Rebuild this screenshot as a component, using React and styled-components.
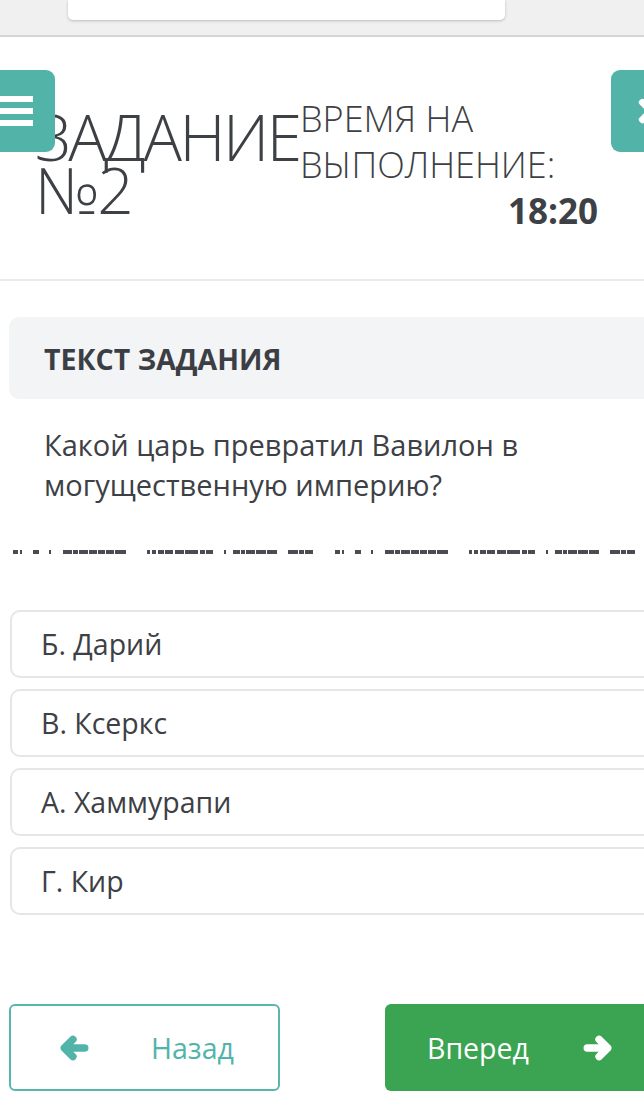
import React from 'react';
import styled, { createGlobalStyle } from 'styled-components';
import { FaTimes } from 'react-icons/fa';

const GlobalStyle = createGlobalStyle`
  html, body {
    margin: 0;
    padding: 0;
    background: #ffffff;
    overflow-x: hidden;
  }
  body {
    font-family: "Open Sans", "Liberation Sans", sans-serif;
    color: #3d4045;
  }
`;

const options = ['Б. Дарий', 'В. Ксеркс', 'А. Хаммурапи', 'Г. Кир'];

// segments of the dotted divider: [start, end] in px, one group
const dashGroup = [
  [13, 18], [20, 22], [33, 39], [49, 51], [63, 72], [73, 78], [79, 88], [89, 97],
  [98, 105], [106, 114], [115, 126], [147, 150], [152, 156], [158, 164], [165, 173],
  [175, 184], [185, 198], [200, 205], [206, 213], [224, 226], [233, 240], [241, 245],
  [246, 255], [256, 266], [267, 277], [288, 298], [299, 304], [305, 313],
];

const Arrow = ({ dir }) => (
  <ArrowSvg viewBox="0 0 28 24" $flip={dir === 'right'}>
    <path
      d="M5 12 H24 M13 4 L5 12 L13 20"
      fill="none"
      stroke="currentColor"
      strokeWidth="7"
      strokeLinecap="round"
      strokeLinejoin="round"
    />
  </ArrowSvg>
);

const App = () => {
  const dashes = [
    ...dashGroup,
    ...dashGroup.map(([a, b]) => [a + 322, b + 322]),
  ];
  let last = 0;

  return (
    <Page>
      <GlobalStyle />
      <TopBar>
        <AddressBox />
      </TopBar>

      <Header>
        <MenuButton>
          <MenuBars>
            <span />
            <span />
            <span />
          </MenuBars>
        </MenuButton>
        <CloseButton>
          <FaTimes />
        </CloseButton>

        <TaskTitle>ЗАДАНИЕ №2</TaskTitle>
        <TimeBlock>
          <TimeLabel>ВРЕМЯ НА ВЫПОЛНЕНИЕ:</TimeLabel>
          <TimeValue>18:20</TimeValue>
        </TimeBlock>
      </Header>

      <TaskPanel>
        <PanelTitle>ТЕКСТ ЗАДАНИЯ</PanelTitle>
      </TaskPanel>

      <Question>Какой царь превратил Вавилон в могущественную империю?</Question>

      <Divider>
        {dashes.map(([a, b], i) => {
          const gap = a - last;
          last = b;
          return <Dash key={i} $gap={gap} $w={b - a} />;
        })}
      </Divider>

      <OptionList>
        {options.map((o) => (
          <Option key={o}>{o}</Option>
        ))}
      </OptionList>

      <NavRow>
        <BackButton>
          <Arrow dir="left" />
          <span>Назад</span>
        </BackButton>
        <NextButton>
          <span>Вперед</span>
          <Arrow dir="right" />
        </NextButton>
      </NavRow>
    </Page>
  );
};

export default App;

const Page = styled.div`
  width: 644px;
  min-height: 1118px;
  overflow: hidden;
`;

const TopBar = styled.div`
  height: 35px;
  background: #f0f0f0;
  border-bottom: 2px solid #d6d6d6;
  padding-left: 68px;
`;

const AddressBox = styled.div`
  width: 437px;
  height: 20px;
  background: #ffffff;
  border-radius: 0 0 5px 5px;
  box-shadow: 0 1px 3px rgba(0, 0, 0, 0.22);
`;

const Header = styled.header`
  position: relative;
  height: 244px;
  box-sizing: border-box;
  border-bottom: 2px solid #ebebeb;
  display: flex;
  align-items: flex-start;
  padding: 59px 0 0 35px;
`;

const MenuButton = styled.div`
  position: absolute;
  left: -20px;
  top: 33px;
  width: 75px;
  height: 82px;
  background: #52b4a9;
  border-radius: 9px;
  display: flex;
  align-items: center;
  z-index: 1;
`;

const MenuBars = styled.div`
  display: flex;
  flex-direction: column;
  gap: 6px;
  margin-left: 20px;
  & span {
    display: block;
    width: 33px;
    height: 6px;
    background: #ffffff;
  }
`;

const CloseButton = styled.div`
  position: absolute;
  left: 611px;
  top: 33px;
  width: 70px;
  height: 82px;
  background: #52b4a9;
  border-radius: 9px;
  color: #ffffff;
  display: flex;
  align-items: center;
  padding-left: 22px;
  box-sizing: border-box;
  font-size: 36px;
`;

const TaskTitle = styled.h1`
  flex: none;
  margin: 14px 0 0;
  width: 265px;
  font-size: 64px;
  line-height: 53px;
  font-weight: 300;
  letter-spacing: -2.5px;
  color: #3d4045;
`;

const TimeBlock = styled.div`
  flex: none;
  width: 298px;
  display: flex;
  flex-direction: column;
`;

const TimeLabel = styled.div`
  font-size: 36px;
  line-height: 46px;
  font-weight: 300;
  width: 290px;
`;

const TimeValue = styled.div`
  font-size: 35px;
  line-height: 46px;
  font-weight: 700;
  text-align: right;
`;

const TaskPanel = styled.div`
  margin: 36px 0 0 9px;
  width: 680px;
  height: 82px;
  background: #f3f4f6;
  border-radius: 10px;
  display: flex;
  align-items: center;
  padding-left: 35px;
  box-sizing: border-box;
`;

const PanelTitle = styled.h2`
  margin: 2px 0 0;
  font-size: 28.5px;
  font-weight: 700;
  color: #3b3e44;
`;

const Question = styled.p`
  margin: 26px 0 0 44px;
  width: 540px;
  font-size: 29px;
  line-height: 40px;
  color: #3d4045;
`;

const Divider = styled.div`
  display: flex;
  margin-top: 45px;
  height: 4px;
`;

const Dash = styled.span`
  flex: none;
  margin-left: ${(p) => p.$gap}px;
  width: ${(p) => p.$w}px;
  height: 4px;
  background: #4a4c52;
`;

const OptionList = styled.div`
  margin: 56px 0 0 10px;
  display: flex;
  flex-direction: column;
  gap: 11px;
`;

const Option = styled.div`
  width: 680px;
  height: 68px;
  box-sizing: border-box;
  border: 2px solid #e6e6e6;
  border-radius: 10px;
  display: flex;
  align-items: center;
  padding-left: 29px;
  font-size: 28.5px;
  color: #3d4045;
`;

const NavRow = styled.div`
  margin: 89px 0 0 9px;
  display: flex;
  gap: 105px;
`;

const ArrowSvg = styled.svg`
  flex: none;
  width: 30px;
  height: 26px;
  transform: ${(p) => (p.$flip ? 'scaleX(-1)' : 'none')};
`;

const BackButton = styled.div`
  flex: none;
  width: 271px;
  height: 87px;
  box-sizing: border-box;
  border: 2px solid #5ab5ac;
  border-radius: 6px;
  display: flex;
  align-items: center;
  padding-left: 48px;
  gap: 62px;
  color: #52b4a9;
  font-size: 28.5px;
`;

const NextButton = styled.div`
  flex: none;
  width: 290px;
  height: 87px;
  background: #3aa452;
  border-radius: 6px;
  display: flex;
  align-items: center;
  padding-left: 42px;
  gap: 54px;
  box-sizing: border-box;
  color: #ffffff;
  font-size: 28.5px;
`;
